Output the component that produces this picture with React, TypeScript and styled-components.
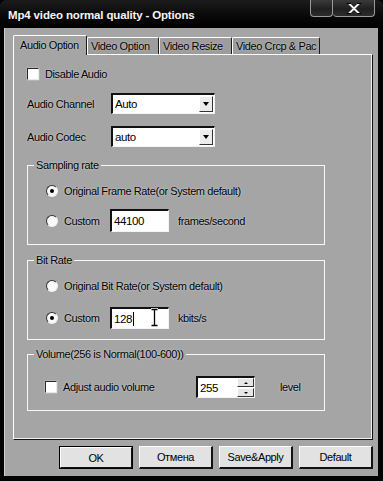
import styled, { createGlobalStyle } from 'styled-components';

const GlobalStyle = createGlobalStyle`
  html, body {
    margin: 0;
    padding: 0;
    background: #000;
    overflow: hidden;
  }
  body {
    font-family: "Liberation Sans", Arial, sans-serif;
    font-size: 11px;
    letter-spacing: -0.4px;
    color: #000;
  }
`;

const FACE = '#a5a5a5';

const Window = styled.div`
  width: 383px;
  height: 481px;
  box-sizing: border-box;
  background: #030303;
  border-radius: 6px 6px 0 0;
  display: flex;
  flex-direction: column;
`;

const TitleBar = styled.div`
  height: 28px;
  flex: none;
  display: flex;
  align-items: flex-start;
  padding: 0 8px;
  background: linear-gradient(180deg, #1c1c1c 0%, #080808 60%, #000 100%);
  border-radius: 6px 6px 0 0;
`;

const TitleText = styled.div`
  margin-top: 8px;
  color: #f4f4f4;
  font-weight: bold;
  font-size: 11.5px;
  letter-spacing: -0.15px;
  line-height: 14px;
`;

const Controls = styled.div`
  margin-left: auto;
  display: flex;
`;

const CtrlButton = styled.div<{ $w: number }>`
  width: ${({ $w }) => $w}px;
  height: 17px;
  box-sizing: border-box;
  border: 1px solid #9a9a9a;
  border-top: none;
  border-radius: 0 0 4px 4px;
  background: linear-gradient(180deg, #3a3a3a 0%, #202020 55%, #2c2c2c 100%);
  display: flex;
  align-items: center;
  justify-content: center;
  & + & {
    border-left: none;
  }
`;

const Body = styled.div`
  flex: 1;
  margin: 0 5px 5px 4px;
  padding: 7px 5px 0 8px;
  background: ${FACE};
  border-left: 1px solid #d0d0d0;
  display: flex;
  flex-direction: column;
`;

const TabList = styled.div`
  display: flex;
  height: 19px;
  align-items: flex-end;
  position: relative;
  z-index: 1;
`;

const Tab = styled.div<{ $active?: boolean; $w: number }>`
  width: ${({ $w }) => $w}px;
  box-sizing: border-box;
  height: ${({ $active }) => ($active ? 20 : 17)}px;
  margin-bottom: ${({ $active }) => ($active ? -1 : 0)}px;
  padding-left: ${({ $active }) => ($active ? 6 : 3)}px;
  background: ${({ $active }) => ($active ? FACE : '#9d9d9d')};
  border-top: 1px solid #fff;
  border-left: 1px solid #fff;
  border-right: 1px solid #1a1a1a;
  border-radius: 2px 2px 0 0;
  line-height: ${({ $active }) => ($active ? 19 : 16)}px;
  font-size: 11px;
  white-space: nowrap;
  overflow: hidden;
  text-shadow: 0 0 2px rgba(255, 255, 255, 0.6);
`;

const Panel = styled.div`
  height: 386px;
  box-sizing: border-box;
  border-top: 1px solid #fff;
  border-left: 1px solid #fff;
  border-right: 1px solid #111;
  border-bottom: 1px solid #111;
  box-shadow: inset -1px -1px 0 #f0f0f0;
  padding: 13px 0 0 13px;
  display: flex;
  flex-direction: column;
  align-items: flex-start;
`;

const Row = styled.div<{ $top?: number; $h: number; $left?: number }>`
  display: flex;
  align-items: center;
  height: ${({ $h }) => $h}px;
  margin-top: ${({ $top }) => $top || 0}px;
  padding-left: ${({ $left }) => $left || 0}px;
`;

const Label = styled.span<{ $w?: number; $ml?: number }>`
  display: inline-block;
  width: ${({ $w }) => ($w ? `${$w}px` : 'auto')};
  margin-left: ${({ $ml }) => $ml || 0}px;
  white-space: nowrap;
  text-shadow: 0 0 2px rgba(255, 255, 255, 0.7);
`;

const CheckBox = styled.span`
  width: 12px;
  height: 12px;
  box-sizing: border-box;
  flex: none;
  background: #fff;
  border-top: 1px solid #2a2a2a;
  border-left: 1px solid #2a2a2a;
  border-right: 1px solid #e8e8e8;
  border-bottom: 1px solid #e8e8e8;
  box-shadow: 0 0 1px #fff;
`;

const Radio = styled.span<{ $checked?: boolean }>`
  width: 12px;
  height: 12px;
  box-sizing: border-box;
  flex: none;
  border-radius: 50%;
  background: #fafafa;
  border: 1px solid;
  border-color: #333 #eee #eee #333;
  display: flex;
  align-items: center;
  justify-content: center;
  &::after {
    content: '';
    width: 4px;
    height: 4px;
    border-radius: 50%;
    background: ${({ $checked }) => ($checked ? '#000' : 'transparent')};
  }
`;

const Sunken = styled.div<{ $w: number; $h: number }>`
  width: ${({ $w }) => $w}px;
  height: ${({ $h }) => $h}px;
  box-sizing: border-box;
  background: #fff;
  border-top: 2px solid #111;
  border-left: 2px solid #111;
  border-right: 1px solid #f4f4f4;
  border-bottom: 1px solid #f4f4f4;
  display: flex;
  align-items: center;
  position: relative;
  flex: none;
`;

const FieldValue = styled.span`
  padding-left: 2px;
  font-size: 11.5px;
  flex: 1;
  display: flex;
  align-items: center;
`;

const DropButton = styled.span`
  width: 14px;
  height: 16px;
  margin-right: 1px;
  box-sizing: border-box;
  background: #ececec;
  border-top: 1px solid #fff;
  border-left: 1px solid #fff;
  border-right: 1px solid #333;
  border-bottom: 1px solid #333;
  display: flex;
  align-items: center;
  justify-content: center;
  &::after {
    content: '';
    border-left: 3.5px solid transparent;
    border-right: 3.5px solid transparent;
    border-top: 4px solid #000;
  }
`;

const Group = styled.fieldset<{ $top: number; $pt: number; $pb: number }>`
  width: 298px;
  box-sizing: border-box;
  margin: ${({ $top }) => $top}px 0 0 0;
  padding: ${({ $pt }) => $pt}px 0 ${({ $pb }) => $pb}px 0;
  border: 1px solid #f8f8f8;
  min-inline-size: 0;
`;

const Legend = styled.legend`
  margin-left: 6px;
  padding: 0 2px;
  line-height: 13px;
  font-size: 11px;
  text-shadow: 0 0 2px rgba(255, 255, 255, 0.7);
`;

const Caret = styled.span`
  width: 1px;
  height: 14px;
  background: #000;
  margin-left: 1px;
`;

const IBeam = styled.svg`
  position: absolute;
  left: 38px;
  top: -1px;
`;

const Spin = styled.div`
  display: flex;
  flex-direction: column;
  width: 17px;
  height: 19px;
  gap: 1px;
`;

const SpinBtn = styled.span<{ $up?: boolean }>`
  flex: 1;
  background: #e6e6e6;
  border-top: 1px solid #fff;
  border-left: 1px solid #fff;
  border-right: 1px solid #333;
  border-bottom: 1px solid #333;
  display: flex;
  align-items: center;
  justify-content: center;
  &::after {
    content: '';
    border-left: 2px solid transparent;
    border-right: 2px solid transparent;
    ${({ $up }) => ($up ? 'border-bottom: 2px solid #000;' : 'border-top: 2px solid #000;')}
  }
`;

const ButtonRow = styled.div`
  display: flex;
  justify-content: flex-end;
  gap: 6px;
  margin-top: 6px;
`;

const Button = styled.div<{ $default?: boolean }>`
  width: 74px;
  height: 23px;
  box-sizing: border-box;
  background: #e2e2e2;
  border-top: 1px solid #fff;
  border-left: 1px solid #fff;
  border-right: 2px solid #111;
  border-bottom: 2px solid #111;
  ${({ $default }) => ($default ? 'outline: 1px solid #000; outline-offset: -1px; border-width: 2px;' : '')}
  display: flex;
  align-items: center;
  justify-content: center;
  font-size: 11px;
`;

export default function App() {
  return (
    <>
      <GlobalStyle />
      <Window>
        <TitleBar>
          <TitleText>Mp4 video normal quality - Options</TitleText>
          <Controls>
            <CtrlButton $w={23} />
            <CtrlButton $w={42}>
              <svg width="16" height="11" viewBox="0 0 16 11">
                <path
                  d="M1 0.5h4l3 3 3-3h4l-5 5 5 5h-4l-3-3-3 3h-4l5-5z"
                  fill="#f4f4f4"
                  stroke="#000"
                  strokeWidth="1"
                />
              </svg>
            </CtrlButton>
          </Controls>
        </TitleBar>
        <Body>
          <TabList>
            <Tab $active $w={74}>Audio Option</Tab>
            <Tab $w={72}>Video Option</Tab>
            <Tab $w={73}>Video Resize</Tab>
            <Tab $w={88}>Video Crcp &amp; Pac</Tab>
          </TabList>
          <Panel>
            <Row $h={12}>
              <CheckBox />
              <Label $ml={6}>Disable Audio</Label>
            </Row>
            <Row $h={21} $top={13}>
              <Label $w={84}>Audio Channel</Label>
              <Sunken $w={104} $h={21}>
                <FieldValue>Auto</FieldValue>
                <DropButton />
              </Sunken>
            </Row>
            <Row $h={21} $top={12}>
              <Label $w={84}>Audio Codec</Label>
              <Sunken $w={104} $h={21}>
                <FieldValue>auto</FieldValue>
                <DropButton />
              </Sunken>
            </Row>

            <Group $top={12} $pt={11} $pb={12}>
              <Legend>Sampling rate</Legend>
              <Row $h={16} $left={18}>
                <Radio $checked />
                <Label $ml={6}>Original Frame Rate(or System default)</Label>
              </Row>
              <Row $h={23} $top={10} $left={18}>
                <Radio />
                <Label $ml={6} $w={46}>Custom</Label>
                <Sunken $w={59} $h={23}>
                  <FieldValue>44100</FieldValue>
                </Sunken>
                <Label $ml={9}>frames/second</Label>
              </Row>
            </Group>

            <Group $top={9} $pt={11} $pb={10}>
              <Legend>Bit Rate</Legend>
              <Row $h={16} $left={18}>
                <Radio />
                <Label $ml={6}>Original Bit Rate(or System default)</Label>
              </Row>
              <Row $h={22} $top={13} $left={18}>
                <Radio $checked />
                <Label $ml={6} $w={46}>Custom</Label>
                <Sunken $w={59} $h={22}>
                  <FieldValue>
                    128
                    <Caret />
                  </FieldValue>
                  <IBeam width="9" height="19" viewBox="0 0 9 19">
                    <path
                      d="M1 1h7M4.5 1v17M1 18h7"
                      stroke="#fff"
                      strokeWidth="3"
                      fill="none"
                    />
                    <path
                      d="M1.5 1.5h6M4.5 1.5v16M1.5 17.5h6"
                      stroke="#000"
                      strokeWidth="1.3"
                      fill="none"
                    />
                  </IBeam>
                </Sunken>
                <Label $ml={9}>kbits/s</Label>
              </Row>
            </Group>

            <Group $top={8} $pt={15} $pb={12}>
              <Legend>Volume(256 is Normal(100-600))</Legend>
              <Row $h={22} $left={17}>
                <CheckBox />
                <Label $ml={6} $w={133}>Adjust audio volume</Label>
                <Sunken $w={59} $h={22}>
                  <FieldValue>255</FieldValue>
                  <Spin>
                    <SpinBtn $up />
                    <SpinBtn />
                  </Spin>
                </Sunken>
                <Label $ml={25}>level</Label>
              </Row>
            </Group>
          </Panel>
          <ButtonRow>
            <Button $default>OK</Button>
            <Button>Отмена</Button>
            <Button>Save&amp;Apply</Button>
            <Button>Default</Button>
          </ButtonRow>
        </Body>
      </Window>
    </>
  );
}
